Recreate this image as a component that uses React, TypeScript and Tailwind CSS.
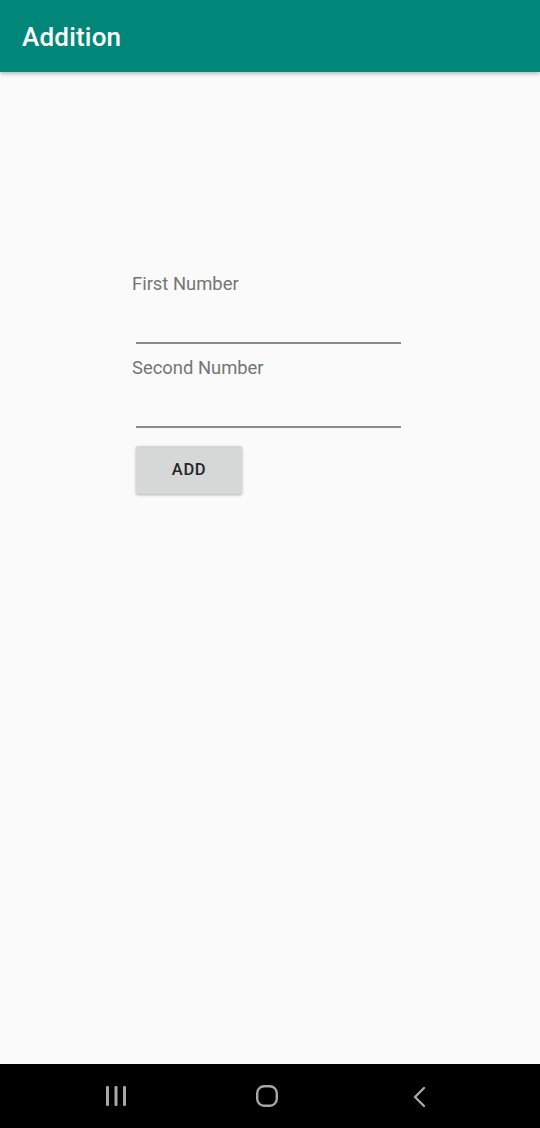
export default function App() {
  return (
    <div className="w-[540px] h-[1128px] flex flex-col bg-[#fafafa] font-['Roboto',sans-serif] overflow-hidden">
      <header className="h-[72px] shrink-0 bg-[#00877a] flex items-center pl-[22px] shadow-[0_2px_4px_rgba(0,0,0,0.25)] relative z-10">
        <h1 className="text-white text-[26px] font-medium leading-none tracking-[0.2px] mt-[1px]">Addition</h1>
      </header>
      <main className="flex-1 flex flex-col pl-[132px] pt-[200px]">
        <label className="text-[18.4px] leading-[24px] text-[#757575]">First Number</label>
        <div className="ml-[4px] mt-[46px] w-[265px] h-[2px] bg-[#8a8a8a]" />
        <label className="mt-[12px] text-[18.4px] leading-[24px] text-[#757575]">Second Number</label>
        <div className="ml-[4px] mt-[46px] w-[265px] h-[2px] bg-[#8a8a8a]" />
        <button className="ml-[4px] mt-[18px] w-[106px] h-[48px] rounded-[2px] bg-[#d6d7d7] shadow-[0_1px_3px_rgba(0,0,0,0.3)] text-[16.5px] font-medium text-[#262626] tracking-[0.6px] flex items-center justify-center">
          ADD
        </button>
      </main>
      <nav className="h-[64px] shrink-0 bg-black flex items-center pl-[105px]">
        <svg width="22" height="22" viewBox="0 0 22 22" className="shrink-0">
          <rect x="1" y="1" width="3" height="20" rx="1.2" fill="#a8a8a8" />
          <rect x="9.5" y="1" width="3" height="20" rx="1.2" fill="#a8a8a8" />
          <rect x="18" y="1" width="3" height="20" rx="1.2" fill="#a8a8a8" />
        </svg>
        <svg width="24" height="24" viewBox="0 0 24 24" className="shrink-0 ml-[128px]">
          <rect x="2.2" y="2.2" width="19.6" height="19.6" rx="7" fill="none" stroke="#a8a8a8" strokeWidth="2.4" />
        </svg>
        <svg width="16" height="22" viewBox="0 0 16 22" className="shrink-0 ml-[132px] mt-[2px]">
          <path d="M13 2 L4 11 L13 20" fill="none" stroke="#a8a8a8" strokeWidth="2.4" strokeLinecap="round" strokeLinejoin="round" />
        </svg>
      </nav>
    </div>
  );
}
